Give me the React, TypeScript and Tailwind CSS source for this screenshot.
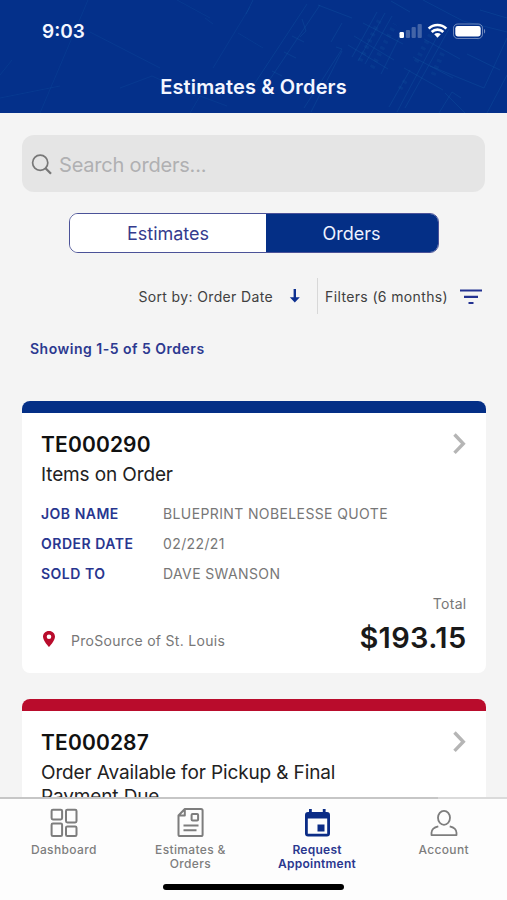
import type { ReactNode } from 'react';
import clsx from 'clsx';

type Detail = { label: string; value: string };

type OrderCardProps = {
  id: string;
  status: string;
  accent: string;
  className?: string;
  children?: ReactNode;
};

const details: Detail[] = [
  { label: 'JOB NAME', value: 'BLUEPRINT NOBELESSE QUOTE' },
  { label: 'ORDER DATE', value: '02/22/21' },
  { label: 'SOLD TO', value: 'DAVE SWANSON' },
];

function BlueprintTexture() {
  return (
    <svg className="absolute inset-0 h-full w-full" viewBox="0 0 507 113" fill="none" stroke="#1762aa" aria-hidden="true">
      <g strokeOpacity="0.18">
        <path d="M0 98 60 86 M40 113 88 0 M90 32 160 68 M0 75 12 60 M120 88 152 76 196 96 M177 0 210 18 M190 113 200 96 227 106" />
        <path d="M213 68 250 7 M238 33 263 48 M205 18 213 24" />
      </g>
      <g strokeOpacity="0.28">
        <path d="M253 86 307 4 M260 94 320 5 M272 71 282 76 M284 52 296 58 M292 36 304 42" />
        <path d="M302 19 306 31 300 37 M304 108 342 49 336 47 M311 112 342 51" />
        <path d="M352 57 377 12 M358 61 385 13 M365 64 392 16 M381 74 402 32 M348 45 388 69 M354 36 394 60 M363 23 403 44" />
        <path d="M389 107 410 70 M397 112 439 33 M405 108 449 29 M404 68 443 90 M413 57 453 78 M424 39 460 59" />
        <path d="M423 0 463 21 507 32 M430 66 484 88 507 38 M456 26 479 40 M439 113 452 92 461 98 M480 10 507 18 M467 54 500 70" />
        <path d="M253 0 246 14 M391 1 410 12 M487 113 507 75 M445 93 465 113 M342 23 331 42 M318 5 352 18" />
      </g>
      <g strokeOpacity="0.16" strokeDasharray="3 4" strokeWidth="5">
        <path d="M360 61 380 19 M372 68 395 24 M416 62 432 32 M433 75 444 50 M400 89 407 78" />
      </g>
    </svg>
  );
}

function StatusIcons() {
  return (
    <svg className="h-5 w-[88px]" viewBox="0 0 88 20" fill="none" aria-hidden="true">
      <rect x="1.5" y="11" width="4.5" height="6" rx="1.2" fill="#fff" />
      <g fill="#fff" fillOpacity="0.25">
        <rect x="7.8" y="9" width="4.2" height="8" rx="1" />
        <rect x="13.6" y="6" width="4.2" height="11" rx="1" />
        <rect x="19.6" y="3" width="4.2" height="14" rx="1" />
      </g>
      <g stroke="#fff" strokeWidth="2.7">
        <path d="M30.7 7.6a12.5 12.5 0 0 1 17.6 0" />
        <path d="M33.7 11a8.2 8.2 0 0 1 11.6 0" />
      </g>
      <path d="M36.2 13.3a4.7 4.7 0 0 1 6.6 0L39.5 16.8z" fill="#fff" />
      <rect x="55.5" y="3" width="29" height="14.5" rx="4.2" stroke="#fff" strokeOpacity="0.42" />
      <rect x="57.3" y="5" width="25.4" height="10.5" rx="2.4" fill="#fff" />
      <path d="M86 8c1.5.5 1.5 4 0 4.5z" fill="#fff" fillOpacity="0.45" />
    </svg>
  );
}

function Chevron() {
  return (
    <svg className="h-6 w-4 shrink-0" viewBox="0 0 16 24" fill="none" stroke="#b5b5b5" strokeWidth="3.4" aria-hidden="true">
      <path d="m3.5 2.5 8.8 9.2-8.8 9.2" />
    </svg>
  );
}

function OrderCard({ id, status, accent, className, children }: OrderCardProps) {
  return (
    <article className={clsx('mx-auto w-[464px] shrink-0 overflow-hidden rounded-lg bg-white', className)}>
      <div className={clsx('h-3', accent)} />
      <div className="pr-[19px] pl-[19.5px] pt-[19px]">
        <div className="flex items-start justify-between">
          <h2 className="text-[21px] leading-[26px] font-semibold tracking-[0.15px] text-[#111]">{id}</h2>
          <Chevron />
        </div>
        <p className="mt-[5px] w-[320px] text-[19px] leading-6 tracking-[-0.13px] text-[#222]">{status}</p>
        {children}
      </div>
    </article>
  );
}

function Tab({ label, active, children }: { label: string; active?: boolean; children: ReactNode }) {
  return (
    <a className={clsx('flex w-[126.7px] flex-col items-center', active ? 'text-[#0b2c86]' : 'text-[#7d7d7d]')}>
      <svg className="h-8 w-8" viewBox="0 0 32 32" fill="none" stroke="currentColor" strokeWidth="2" aria-hidden="true">
        {children}
      </svg>
      <span
        className={clsx(
          'mt-1 w-[90px] text-center text-[12px] leading-[14px]',
          active ? 'font-semibold tracking-[0.25px] text-[#2a378f]' : 'font-medium tracking-[0.35px]',
        )}
      >
        {label}
      </span>
    </a>
  );
}

export default function App() {
  return (
    <div className="flex h-[900px] w-[507px] flex-col overflow-hidden bg-[#f4f4f4] font-['Inter',sans-serif]">
      <header className="relative h-[113px] shrink-0 bg-[#04308a]">
        <BlueprintTexture />
        <div className="relative flex items-start justify-between pt-[21px] pr-[21px] pl-[42px] text-[#f4f6ff]">
          <span className="mt-px text-[19px] leading-5 font-semibold">9:03</span>
          <StatusIcons />
        </div>
        <h1 className="relative mt-[33px] text-center text-[20px] leading-6 font-semibold tracking-[0.15px] text-[#f4f6ff]">
          Estimates &amp; Orders
        </h1>
      </header>

      <main className="flex min-h-0 flex-1 flex-col overflow-hidden">
        <div className="mx-auto mt-[22px] flex h-[57px] w-[463px] shrink-0 items-center rounded-[12px] bg-[#e5e5e5] pl-[9px]">
          <svg className="mt-0.5 h-6 w-6" viewBox="0 0 24 24" fill="none" stroke="#777" strokeWidth="1.7" aria-hidden="true">
            <circle cx="9.2" cy="9.7" r="7.6" />
            <path d="m14.5 15.2 5.5 5.6" strokeWidth="2.3" />
          </svg>
          <span className="mt-0.5 ml-1 text-[20px] tracking-[-0.2px] text-[#b0b0b2]">Search orders...</span>
        </div>

        <div className="mx-auto mt-[21px] flex h-10 w-[370px] shrink-0 overflow-hidden rounded-[9px] border border-[#4b5298] text-[18px]">
          <button className="w-[196px] bg-white pl-px text-[#343b8d]">Estimates</button>
          <button className="flex-1 bg-[#042f86] text-[#eef2ff]">Orders</button>
        </div>

        <div className="mt-[25px] flex h-9 shrink-0 items-center justify-end pr-[24px] text-[14px] tracking-[0.36px] text-[#404040]">
          <span className="mt-px">Sort by: Order Date</span>
          <svg className="ml-[16px] h-4 w-3" viewBox="0 0 12 16" aria-hidden="true">
            <path d="M4.6 1h2.4v8.3h3.8L5.8 14.5.8 9.3h3.8z" fill="#0d3090" />
          </svg>
          <span className="ml-[16px] h-9 w-px bg-[#d8d8d8]" />
          <span className="mt-px ml-[7px]">Filters (6 months)</span>
          <svg className="mt-0.5 ml-[11px] h-4 w-6" viewBox="0 0 24 16" stroke="#233291" strokeWidth="2.2" aria-hidden="true">
            <path d="M1 1.5h22M5 7.8h14M9.5 14h5" />
          </svg>
        </div>

        <p className="mt-[25px] ml-[30px] shrink-0 text-[14px] leading-5 font-semibold tracking-[0.5px] text-[#2c3990]">
          Showing 1-5 of 5 Orders
        </p>

        <OrderCard id="TE000290" status="Items on Order" accent="bg-[#042f86]" className="mt-[42px] h-[272px]">
          <dl className="mt-[11px]">
            {details.map((detail) => (
              <div key={detail.label} className="flex h-[30px] items-center text-[14px]">
                <dt className="w-[122px] font-semibold tracking-[0.5px] text-[#28368f]">{detail.label}</dt>
                <dd className="tracking-[0.38px] text-[#777]">{detail.value}</dd>
              </div>
            ))}
          </dl>
          <p className="mt-[6px] text-right text-[14px] leading-5 tracking-[0.3px] text-[#777]">Total</p>
          <div className="mt-1 flex h-10 items-center">
            <svg className="mt-0.5 h-4 w-4" viewBox="0 0 16 16" aria-hidden="true">
              <path
                fillRule="evenodd"
                fill="#b90c2c"
                d="M8 0C4.4 0 2 2.6 2 5.8 2 9.9 8 16 8 16s6-6.1 6-10.2C14 2.6 11.6 0 8 0m0 3.4a2.3 2.3 0 1 1 0 4.6 2.3 2.3 0 0 1 0-4.6"
              />
            </svg>
            <span className="mt-1 ml-[14px] text-[14px] tracking-[0.3px] text-[#777]">ProSource of St. Louis</span>
            <strong className="ml-auto text-[29px] font-semibold tracking-[0.35px] text-[#191919]">$193.15</strong>
          </div>
        </OrderCard>

        <OrderCard
          id="TE000287"
          status="Order Available for Pickup & Final Payment Due"
          accent="bg-[#b90c2c]"
          className="mt-[26px] h-[272px]"
        />
      </main>

      <footer className="relative flex h-[103px] shrink-0 border-t-2 border-[#dadada] bg-[#fdfdfd] pt-[8px] pl-[0.5px]">
        <div className="absolute -top-0.5 left-0 h-0.5 w-[438px] bg-[#c6c6c6]" />
        <Tab label="Dashboard">
          <rect x="3.6" y="2.8" width="10.5" height="9.6" rx="1.3" />
          <rect x="18" y="2.8" width="10.5" height="12.6" rx="1.3" />
          <rect x="3.6" y="16.5" width="10.5" height="12.6" rx="1.3" />
          <rect x="18" y="19.5" width="10.5" height="9.6" rx="1.3" />
        </Tab>
        <Tab label="Estimates & Orders">
          <path d="M10.8 2H27a1.6 1.6 0 0 1 1.6 1.6v23.9a1.6 1.6 0 0 1-1.6 1.6H6.1a1.6 1.6 0 0 1-1.6-1.6V8.5zM10.8 2v6.5H4.500" strokeLinejoin="round" />
          <rect x="17.6" y="7.1" width="6.5" height="6.5" rx="1" />
          <path d="M9.5 18.5h15M9.5 23.3h13" />
        </Tab>
        <Tab label="Request Appointment" active>
          <path
            d="M8 2h2.8v3h11V2h2.800v3H26a3 3 0 0 1 3 3v18.5a3 3 0 0 1-3 3H7a3 3 0 0 1-3-3V8a3 3 0 0 1 3-3h1zM6.800 11.500v15.200h19.400V11.500zM16.500 17.500h7v7h-7z"
            fill="currentColor"
            fillRule="evenodd"
            stroke="none"
          />
        </Tab>
        <Tab label="Account">
          <ellipse cx="16" cy="10.8" rx="6" ry="7" strokeWidth="1.8" />
          <path d="M10.3 19.3c-4.300 1-6.800 3.500-6.800 6.500v2.300h25v-2.300c0-3-2.500-5.500-6.800-6.500" strokeWidth="1.800" strokeLinejoin="round" />
        </Tab>
        <div className="absolute bottom-[10px] left-[163px] h-[6px] w-[181px] rounded-full bg-black" />
      </footer>
    </div>
  );
}
